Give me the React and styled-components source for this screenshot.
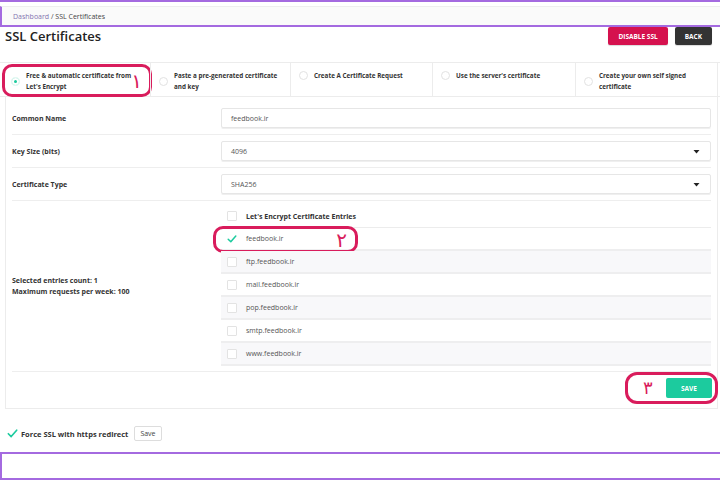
import styled, { createGlobalStyle } from "styled-components";

const purple = "#a46ae0";
const pink = "#d91c5c";
const teal = "#1ccb9e";
const line = "#ececec";

const GlobalStyle = createGlobalStyle`
  body {
    margin: 0;
    background: #fff;
    font-family: "Open Sans", "Noto Sans", sans-serif;
    color: #333;
  }
`;

const tabs = [
  ["Free & automatic certificate from", "Let's Encrypt"],
  ["Paste a pre-generated certificate", "and key"],
  ["Create A Certificate Request"],
  ["Use the server's certificate"],
  ["Create your own self signed", "certificate"],
];

const entries = [
  "feedbook.ir",
  "ftp.feedbook.ir",
  "mail.feedbook.ir",
  "pop.feedbook.ir",
  "smtp.feedbook.ir",
  "www.feedbook.ir",
];

const Check = ({ size = 10 }) => (
  <svg width={size} height={size} viewBox="0 0 10 10">
    <polyline
      points="1.2,5.2 3.8,7.8 8.8,2"
      fill="none"
      stroke={teal}
      strokeWidth="1.5"
      strokeLinecap="round"
      strokeLinejoin="round"
    />
  </svg>
);

const Caret = () => (
  <svg width="7" height="5" viewBox="0 0 7 5">
    <polygon points="0.5,1 6.5,1 3.5,4.5" fill="#222" />
  </svg>
);

const App = () => {
  return (
    <>
      <GlobalStyle />
      <TopLine />
      <Breadcrumb>
        <Crumb>Dashboard</Crumb>&nbsp;/ SSL Certificates
      </Breadcrumb>

      <Header>
        <Title>SSL Certificates</Title>
        <Actions>
          <ActionButton color="#d5114e">Disable SSL</ActionButton>
          <ActionButton color="#333">Back</ActionButton>
        </Actions>
      </Header>

      <Tabs>
        {tabs.map((lines, i) => (
          <Tab key={i} first={i === 0}>
            <Option>
              <Radio active={i === 0} />
              <TabText>
                {lines.map((l) => (
                  <div key={l}>{l}</div>
                ))}
              </TabText>
            </Option>
            {i === 0 && (
              <TabRing>
                <Digit size={20}>۱</Digit>
              </TabRing>
            )}
          </Tab>
        ))}
      </Tabs>

      <Card>
        <FieldRow>
          <Label>Common Name</Label>
          <Control>feedbook.ir</Control>
        </FieldRow>
        <FieldRow>
          <Label>Key Size (bits)</Label>
          <Control>
            4096
            <Caret />
          </Control>
        </FieldRow>
        <FieldRow>
          <Label>Certificate Type</Label>
          <Control>
            SHA256
            <Caret />
          </Control>
        </FieldRow>

        <EntriesRow>
          <Label>
            Selected entries count: 1
            <br />
            Maximum requests per week: 100
          </Label>
          <Table>
            <TableHead>
              <Box />
              Let's Encrypt Certificate Entries
            </TableHead>
            {entries.map((e, i) => (
              <EntryRow key={e} striped={i % 2 === 1}>
                {i === 0 ? (
                  <CheckSlot>
                    <Check />
                  </CheckSlot>
                ) : (
                  <Box />
                )}
                {e}
                {i === 0 && (
                  <EntryRing>
                    <Digit size={20}>۲</Digit>
                  </EntryRing>
                )}
              </EntryRow>
            ))}
          </Table>
        </EntriesRow>

        <SaveRow>
          <SaveRing>
            <Digit size={18} thin>
              ۳
            </Digit>
            <SaveButton>Save</SaveButton>
          </SaveRing>
        </SaveRow>
      </Card>

      <ForceRow>
        <Check size={11} />
        <ForceText>Force SSL with https redirect</ForceText>
        <SmallButton>Save</SmallButton>
      </ForceRow>

      <Footer />
    </>
  );
};

export default App;

const TopLine = styled.div`
  height: 2px;
  background: ${purple};
`;

const Breadcrumb = styled.div`
  margin-top: 4px;
  height: 17px;
  box-sizing: content-box;
  background: #fafafa;
  border-top: 1px solid #eee;
  border-left: 2px solid ${purple};
  border-bottom: 2px solid ${purple};
  padding: 1px 11px 0;
  display: flex;
  align-items: center;
  font-size: 7px;
  color: #444;
`;

const Crumb = styled.span`
  color: #8473b0;
`;

const Header = styled.div`
  height: 35px;
  display: flex;
  justify-content: space-between;
  align-items: flex-start;
  padding: 0 8px 0 5px;
`;

const Title = styled.h1`
  margin: -1px 0 0;
  font-size: 13px;
  line-height: 20px;
  font-weight: 600;
  color: #222;
`;

const Actions = styled.div`
  display: flex;
  gap: 7px;
`;

const ActionButton = styled.button`
  height: 18px;
  padding: 0 10px;
  border: none;
  border-radius: 2px;
  background: ${(p) => p.color};
  color: #fff;
  font-family: inherit;
  font-size: 6.5px;
  font-weight: 700;
  text-transform: uppercase;
  box-shadow: 0 1px 1px rgba(0, 0, 0, 0.15);
`;

const Tabs = styled.div`
  display: grid;
  grid-template-columns: 150px 140px 142px 143px 143px;
  height: 35px;
  box-sizing: border-box;
  border-top: 1px solid ${line};
  border-bottom: 1px solid ${line};
`;

const Tab = styled.div`
  position: relative;
  display: flex;
  align-items: flex-start;
  padding: 7px 6px 0 8px;
  border-left: ${(p) => (p.first ? "none" : `1px solid ${line}`)};
  height: 34px;
  box-sizing: border-box;

  &:last-child {
    border-right: 1px solid ${line};
  }
`;

const Option = styled.div`
  display: flex;
  align-items: center;
  gap: 6px;
`;

const Radio = styled.span`
  flex: none;
  width: 9px;
  height: 9px;
  box-sizing: border-box;
  border-radius: 50%;
  border: 1px solid ${(p) => (p.active ? "#fff" : "#e2e2e2")};
  background: ${(p) => (p.active ? teal : "#fff")};
  box-shadow: ${(p) => (p.active ? "inset 0 0 0 2px #fff" : "none")};
  margin-left: ${(p) => (p.active ? "3px" : "0")};
`;

const TabText = styled.div`
  font-size: 6.3px;
  line-height: 11px;
  font-weight: 700;
  color: #333;
`;

const TabRing = styled.div`
  position: absolute;
  top: 1px;
  left: 2px;
  width: 150px;
  height: 33px;
  box-sizing: border-box;
  border: 3px solid ${pink};
  border-radius: 10px;
  display: flex;
  align-items: center;
  justify-content: flex-end;
  padding-right: 7px;
`;

const Digit = styled.span`
  font-family: "DejaVu Sans", sans-serif;
  font-size: ${(p) => p.size}px;
  line-height: 1;
  font-weight: ${(p) => (p.thin ? 300 : 400)};
  color: ${pink};
`;

const Card = styled.div`
  margin: 0 2px 0 5px;
  padding: 5px 6px 0;
  border: 1px solid ${line};
  border-top: none;
`;

const FieldRow = styled.div`
  display: grid;
  grid-template-columns: 209px 1fr;
  align-items: center;
  padding: 6px 0;
  border-bottom: 1px solid #eee;
`;

const Label = styled.div`
  font-size: 7px;
  line-height: 11px;
  font-weight: 700;
  color: #333;
`;

const Control = styled.div`
  height: 20px;
  box-sizing: border-box;
  border: 1px solid #e6e6e6;
  border-radius: 2px;
  box-shadow: 0 1px 0 #efefef;
  padding: 0 10px 0 9px;
  display: flex;
  align-items: center;
  justify-content: space-between;
  font-size: 7px;
  color: #555;
`;

const EntriesRow = styled(FieldRow)`
  padding: 4px 0 5px;
`;

const Table = styled.div`
  display: flex;
  flex-direction: column;
`;

const TableHead = styled.div`
  height: 23px;
  box-sizing: border-box;
  border-bottom: 1px solid ${line};
  display: flex;
  align-items: center;
  gap: 9px;
  padding-left: 6px;
  font-size: 7px;
  font-weight: 700;
  color: #333;
`;

const EntryRow = styled.div`
  position: relative;
  height: 23px;
  box-sizing: border-box;
  border-bottom: 2px solid #eeeeef;
  background: ${(p) => (p.striped ? "#f8f8fa" : "#fff")};
  display: flex;
  align-items: center;
  gap: 9px;
  padding-left: 6px;
  font-size: 7px;
  color: #555;
`;

const Box = styled.span`
  flex: none;
  width: 10px;
  height: 10px;
  box-sizing: border-box;
  border: 1px solid #e3e3e3;
  border-radius: 1px;
  background: #fff;
`;

const CheckSlot = styled.span`
  flex: none;
  width: 10px;
  height: 10px;
  display: flex;
`;

const EntryRing = styled.div`
  position: absolute;
  left: -8px;
  top: -2px;
  width: 145px;
  height: 27px;
  box-sizing: border-box;
  border: 3px solid ${pink};
  border-radius: 10px;
  display: flex;
  align-items: center;
  justify-content: flex-end;
  padding-right: 8px;
`;

const SaveRow = styled.div`
  display: flex;
  justify-content: flex-end;
  padding: 0 0 4px;
  margin-right: -7px;
`;

const SaveRing = styled.div`
  display: flex;
  align-items: center;
  gap: 13px;
  padding: 3px 3px 3px 15px;
  border: 3px solid ${pink};
  border-radius: 12px;
`;

const SaveButton = styled.button`
  width: 46px;
  height: 20px;
  border: none;
  border-radius: 2px;
  background: ${teal};
  color: #fff;
  font-family: inherit;
  font-size: 6.5px;
  font-weight: 700;
  text-transform: uppercase;
`;

const ForceRow = styled.div`
  display: flex;
  align-items: center;
  gap: 3px;
  padding: 17px 7px 11px;
  height: 15px;
`;

const ForceText = styled.span`
  font-size: 7.5px;
  font-weight: 700;
  color: #333;
  margin-right: 3px;
`;

const SmallButton = styled.button`
  height: 15px;
  padding: 0 5px;
  border: 1px solid #ddd;
  border-radius: 2px;
  background: #fff;
  font-family: inherit;
  font-size: 7px;
  color: #444;
`;

const Footer = styled.div`
  height: 24px;
  border-top: 2px solid ${purple};
  border-left: 2px solid ${purple};
  border-bottom: 2px solid ${purple};
`;
